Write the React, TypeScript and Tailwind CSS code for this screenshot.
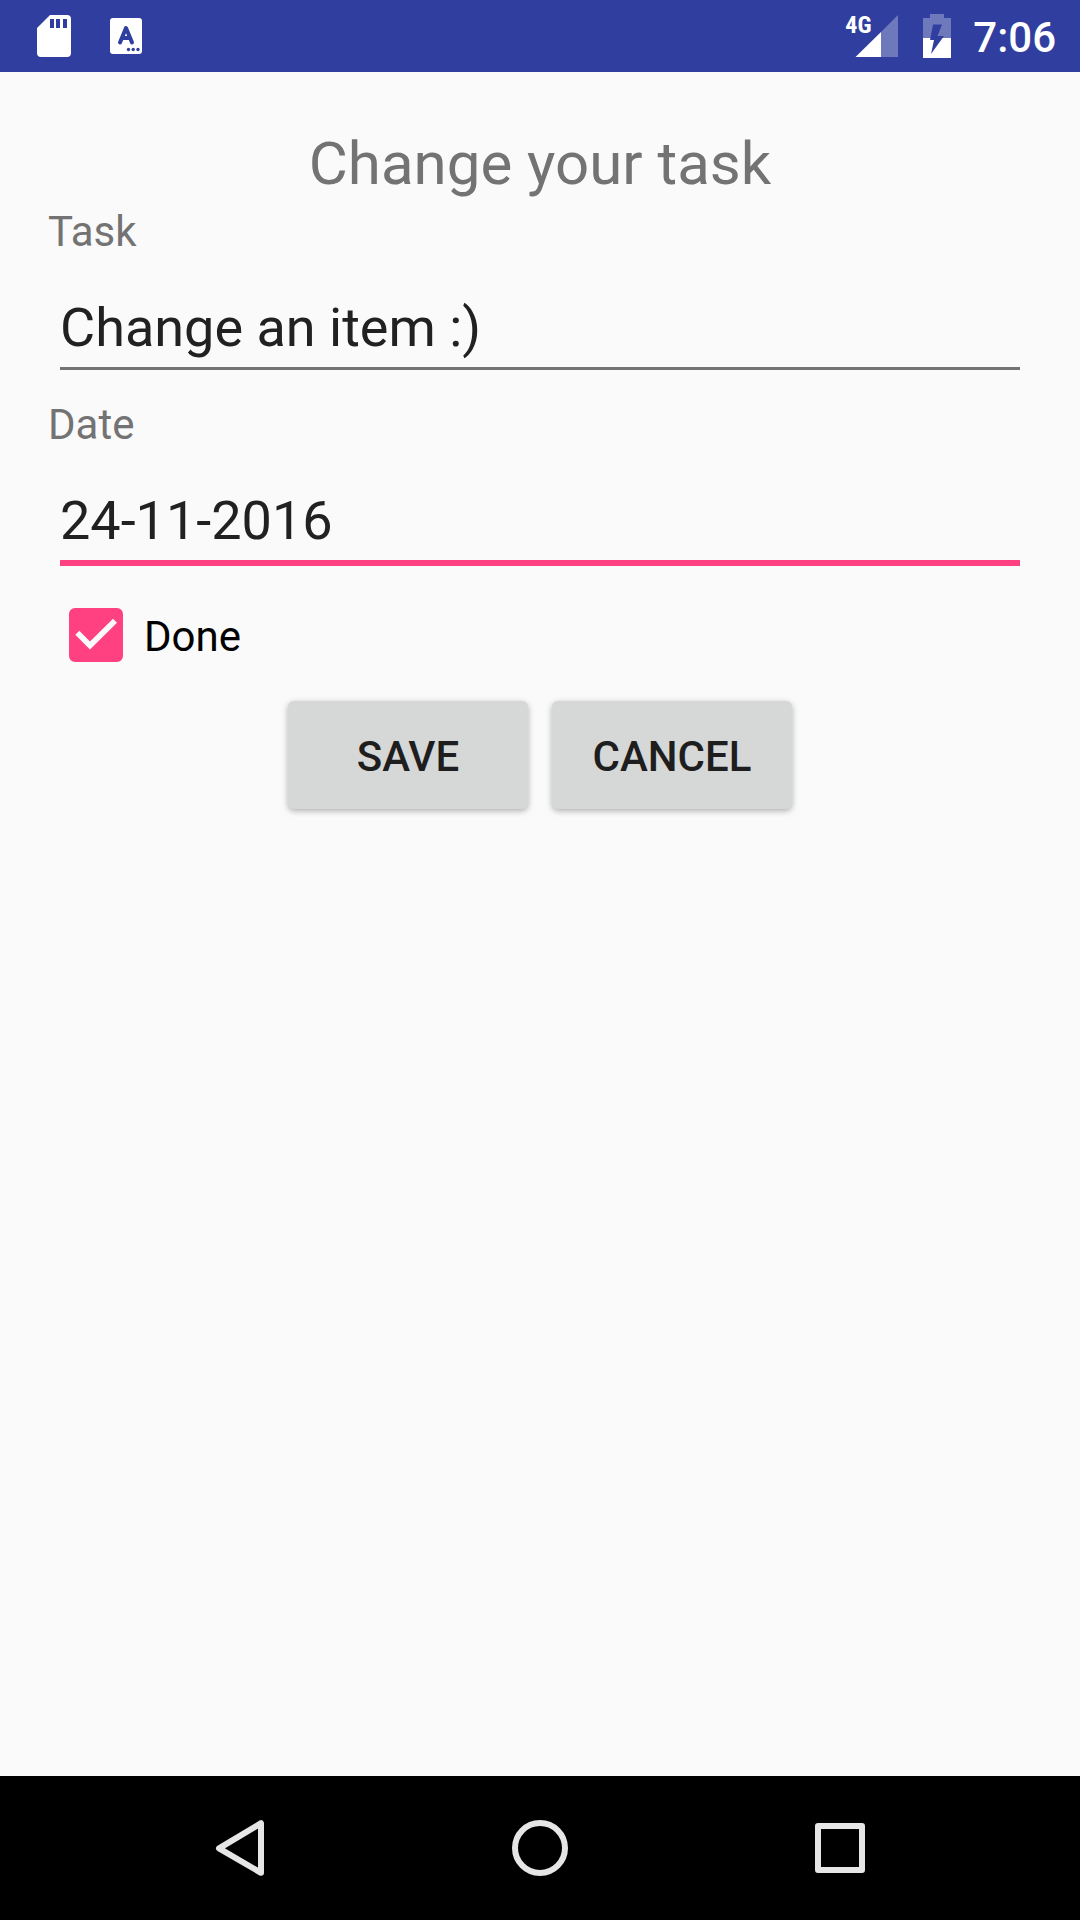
import { useState } from "react";

function SdCardIcon() {
  return (
    <svg className="h-[42px] w-[34px]" viewBox="0 0 34 42" aria-hidden="true">
      <path
        fill="#fff"
        fillRule="evenodd"
        d="M13 0H30Q34 0 34 4V38Q34 42 30 42H4Q0 42 0 38V13ZM13 4V13H17V4ZM19 4V13H23V4ZM26 4V13H30V4Z"
      />
    </svg>
  );
}

function KeyboardNoticeIcon() {
  return (
    <svg className="h-9 w-8" viewBox="0 0 32 36" aria-hidden="true">
      <rect width="32" height="36" rx="3" fill="#fff" />
      <path
        d="M10 24.500L16 10L22 24.500M12 20H20"
        fill="none"
        stroke="#303f9f"
        strokeWidth="4"
        strokeLinecap="round"
        strokeLinejoin="round"
      />
      <g fill="#303f9f">
        <circle cx="18.500" cy="31.500" r="1.700" />
        <circle cx="23.200" cy="31.500" r="1.700" />
        <circle cx="28" cy="31.500" r="1.700" />
      </g>
    </svg>
  );
}

function SignalIcon() {
  return (
    <div className="relative h-[42px] w-[53px]">
      <svg className="h-full w-full" viewBox="0 0 53 42" aria-hidden="true">
        <path d="M53 0V42H36V17Z" fill="#fff" fillOpacity="0.300" />
        <path d="M36 17V42H10.500Z" fill="#fff" />
      </svg>
      <span className="absolute top-0 left-0 font-['Roboto_Condensed',Roboto,sans-serif] text-[24px] leading-[20px] font-bold">
        4G
      </span>
    </div>
  );
}

function BatteryIcon() {
  return (
    <svg className="h-11 w-7" viewBox="0 0 28 44" aria-hidden="true">
      <path d="M7 0H21V4H28V24H0V4H7Z" fill="#fff" fillOpacity="0.300" />
      <path d="M0 24H28V44H0Z" fill="#fff" />
      <path d="M10 10.500H19L14.500 22H21L8 40L11 26H7Z" fill="#303f9f" />
    </svg>
  );
}

function StatusBar() {
  return (
    <header className="flex h-[72px] items-center justify-between bg-[#303f9f] pr-6 pl-[37px] text-white">
      <div className="flex items-center gap-[39px]">
        <SdCardIcon />
        <KeyboardNoticeIcon />
      </div>
      <div className="flex items-center">
        <SignalIcon />
        <div className="ml-[25px]">
          <BatteryIcon />
        </div>
        <time className="ml-[22px] pt-[3px] text-[42px] leading-[50px] font-medium">7:06</time>
      </div>
    </header>
  );
}

function NavBar() {
  const button = "flex h-full flex-1 items-center justify-center";
  return (
    <nav className="flex h-36 justify-center bg-black px-[90px]">
      <button type="button" aria-label="Back" className={button}>
        <svg className="size-[60px]" viewBox="0 0 60 60" fill="none" stroke="#e6e6e6" strokeWidth="6" strokeLinejoin="round">
          <path d="M9 30.300L51 5.200V54.800Z" />
        </svg>
      </button>
      <button type="button" aria-label="Home" className={button}>
        <svg className="size-[60px]" viewBox="0 0 60 60" fill="none" stroke="#e6e6e6" strokeWidth="6">
          <circle cx="30" cy="30" r="25" />
        </svg>
      </button>
      <button type="button" aria-label="Overview" className={button}>
        <svg className="size-[60px]" viewBox="0 0 60 60" fill="none" stroke="#e6e6e6" strokeWidth="6" strokeLinejoin="round">
          <rect x="8" y="8" width="44" height="44" />
        </svg>
      </button>
    </nav>
  );
}

export default function App() {
  const [task, setTask] = useState("Change an item :)");
  const [date, setDate] = useState("24-11-2016");
  const [done, setDone] = useState(true);
  const actionButton =
    "h-[108px] w-60 rounded-md bg-[#d6d7d7] pt-1 text-[42px] leading-[50px] font-medium text-[#1e1e1e] uppercase shadow-[0_2px_6px_rgba(0,0,0,0.3)]";

  return (
    <div className="flex min-h-screen flex-col bg-[#fafafa] font-[Roboto,sans-serif]">
      <StatusBar />
      <main className="flex-1 px-12 pt-[52px]">
        <form onSubmit={(e) => e.preventDefault()}>
          <h1 className="text-center text-[60px] leading-[80px] text-[#737373]">Change your task</h1>

          <label htmlFor="task" className="block text-[42px] leading-[56px] text-[#737373]">
            Task
          </label>
          <div className="mt-7 px-3">
            <input
              id="task"
              type="text"
              value={task}
              onChange={(e) => setTask(e.target.value)}
              className="block h-[82px] w-full border-b-[3px] border-[#737373] text-[54px] leading-[63px] text-[#212121] outline-none"
            />
          </div>

          <label htmlFor="date" className="mt-[27px] block text-[42px] leading-[56px] text-[#737373]">
            Date
          </label>
          <div className="mt-7 px-3">
            <input
              id="date"
              type="text"
              value={date}
              onChange={(e) => setDate(e.target.value)}
              className="block h-[85px] w-full border-b-[6px] border-[#ff4081] text-[54px] leading-[63px] text-[#212121] outline-none"
            />
          </div>

          <div className="mt-[42px] flex items-start gap-[21px] pl-[21px]">
            <div className="relative size-[54px]">
              <input
                id="done"
                type="checkbox"
                checked={done}
                onChange={(e) => setDone(e.target.checked)}
                className="block size-full appearance-none rounded-md border-[6px] border-[#737373] checked:border-[#ff4081] checked:bg-[#ff4081]"
              />
              {done && (
                <svg className="pointer-events-none absolute inset-0" viewBox="0 0 54 54" fill="none" aria-hidden="true">
                  <path d="M8.300 24.800L21 37.500L46 12.800" stroke="#fafafa" strokeWidth="5.700" />
                </svg>
              )}
            </div>
            <label htmlFor="done" className="text-[42px] leading-[58px] text-black">
              Done
            </label>
          </div>

          <div className="mt-[35px] flex justify-center gap-6">
            <button type="submit" className={actionButton}>
              Save
            </button>
            <button type="button" className={actionButton}>
              Cancel
            </button>
          </div>
        </form>
      </main>
      <NavBar />
    </div>
  );
}
